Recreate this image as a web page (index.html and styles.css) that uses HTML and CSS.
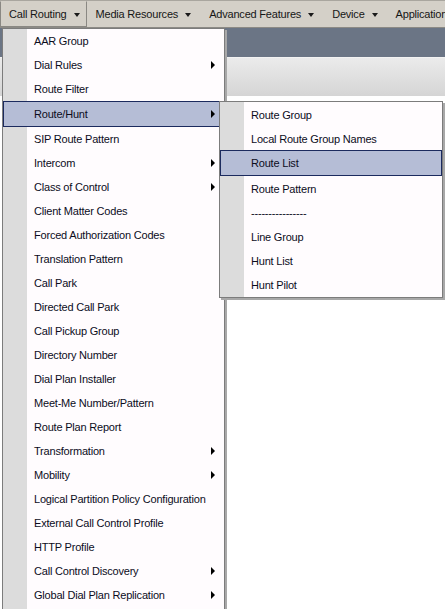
FILE: index.html
```html
<!DOCTYPE html>
<html>
<head>
<meta charset="utf-8">
<link rel="stylesheet" href="styles.css">
</head>
<body>
<div class="menubar">
  <div class="bar-item open">Call Routing<span class="down"></span></div>
  <div class="bar-item">Media Resources<span class="down"></span></div>
  <div class="bar-item">Advanced Features<span class="down"></span></div>
  <div class="bar-item">Device<span class="down"></span></div>
  <div class="bar-item">Application</div>
</div>
<div class="band-dark"></div>
<div class="band-light"></div>

<ul class="menu main-menu">
  <li>AAR Group</li>
  <li class="sub">Dial Rules</li>
  <li>Route Filter</li>
  <li class="sub hot">Route/Hunt</li>
  <li>SIP Route Pattern</li>
  <li class="sub">Intercom</li>
  <li class="sub">Class of Control</li>
  <li>Client Matter Codes</li>
  <li>Forced Authorization Codes</li>
  <li>Translation Pattern</li>
  <li>Call Park</li>
  <li>Directed Call Park</li>
  <li>Call Pickup Group</li>
  <li>Directory Number</li>
  <li>Dial Plan Installer</li>
  <li>Meet-Me Number/Pattern</li>
  <li>Route Plan Report</li>
  <li class="sub">Transformation</li>
  <li class="sub">Mobility</li>
  <li>Logical Partition Policy Configuration</li>
  <li>External Call Control Profile</li>
  <li>HTTP Profile</li>
  <li class="sub">Call Control Discovery</li>
  <li class="sub">Global Dial Plan Replication</li>
</ul>

<ul class="menu sub-menu">
  <li>Route Group</li>
  <li>Local Route Group Names</li>
  <li class="hot">Route List</li>
  <li>Route Pattern</li>
  <li>----------------</li>
  <li>Line Group</li>
  <li>Hunt List</li>
  <li>Hunt Pilot</li>
</ul>
</body>
</html>
```

FILE: styles.css
```css
html, body {
  margin: 0;
  padding: 0;
  background: #ffffff;
  font-family: "Liberation Sans", Arial, sans-serif;
  font-size: 11px;
  letter-spacing: -0.2px;
  color: #0c0c1c;
  overflow: hidden;
  width: 445px;
  height: 609px;
}

.menubar {
  display: flex;
  height: 26px;
  background: #d4d0c8;
  border-top: 1px solid #a9a69f;
  border-bottom: 1px solid #8c8a85;
  box-sizing: content-box;
  white-space: nowrap;
  overflow: hidden;
}

.bar-item {
  display: flex;
  align-items: center;
  flex-shrink: 0;
  padding: 0 8px 0 8px;
  gap: 7px;
  height: 24px;
  border: 1px solid transparent;
  color: #161616;
}

.bar-item.open {
  border-color: #8a8883;
  border-top-color: #d4d0c8;
  padding-right: 6px;
}

.down {
  width: 0;
  height: 0;
  border-left: 3.5px solid transparent;
  border-right: 3.5px solid transparent;
  border-top: 4px solid #1a1a1a;
  margin-top: 1px;
}

.band-dark {
  height: 29px;
  background: #6b7585;
}

.band-light {
  height: 38px;
  border-top: 1px solid #f2f2f2;
  background: linear-gradient(#ebebeb, #d5d5d5);
}

.menu {
  position: absolute;
  list-style: none;
  margin: 0;
  padding: 0;
  background: linear-gradient(to right, #dcdcdc 0, #dcdcdc 24px, #fffcfe 24px);
  border: 1px solid #7c7c7c;
  box-shadow: 2px 2px 0 #a8a8a8;
}

.main-menu {
  left: 2px;
  top: 28px;
  width: 221px;
  height: 600px;
}

.sub-menu {
  left: 219px;
  top: 101px;
  width: 222px;
  padding-top: 1px;
}

.menu li {
  position: relative;
  height: 24px;
  line-height: 24px;
  padding-left: 31px;
  white-space: nowrap;
}

.menu li.hot {
  height: 24px;
  border: 1px solid #1b2a5e;
  background: #b5bdd6;
  padding-left: 30px;
}

.sub-menu li.hot {
  margin-top: -1px;
  margin-bottom: 1px;
}

.main-menu li.hot {
  margin-right: -4px;
}

.menu li.sub::after {
  content: "";
  position: absolute;
  right: 9px;
  top: 8px;
  width: 0;
  height: 0;
  border-top: 4px solid transparent;
  border-bottom: 4px solid transparent;
  border-left: 4px solid #000000;
}

.main-menu li.hot.sub::after {
  right: 12px;
  top: 8px;
}
```
